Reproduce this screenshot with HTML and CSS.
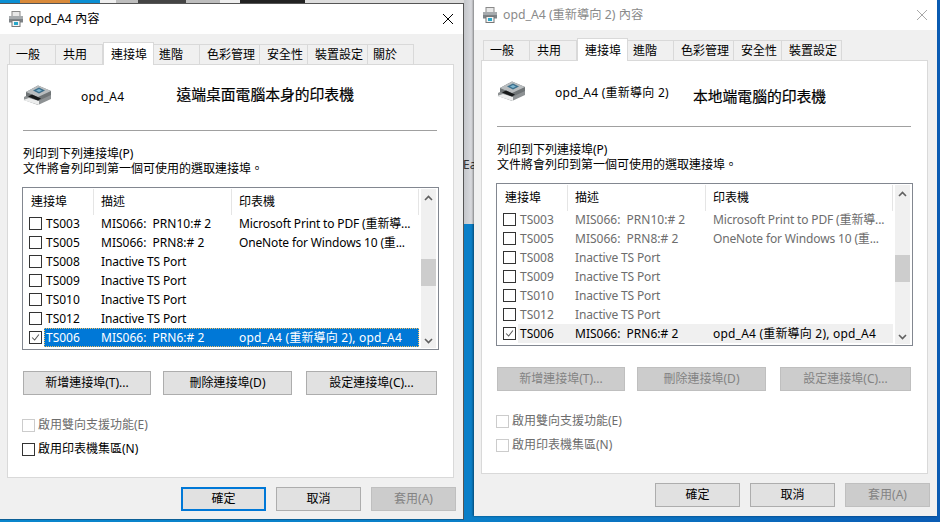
FILE: index.html
```html
<!DOCTYPE html>
<html lang="zh-Hant">
<head>
<meta charset="utf-8">
<title>opd_A4 內容</title>
<link rel="stylesheet" href="styles.css">
</head>
<body>
<div class="desktop">
  <div class="strip strip-top"></div>
  <div class="strip strip-gap"><span class="peek">Ea</span></div>

  <section class="window window-left">
    <header class="titlebar">
      <svg class="title-icon" viewBox="0 0 16 16"><rect x="4" y="0.5" width="8" height="5" fill="#e8e8e8" stroke="#8a8a8a"/><path d="M1 5.5h14v6H1z" fill="#7d8286"/><rect x="1" y="5" width="14" height="3" fill="#a6aaad"/><rect x="4" y="9.5" width="8" height="6" fill="#f4f4f4" stroke="#777"/><rect x="6" y="11" width="4" height="3" fill="#2aa7c9"/></svg>
      <span class="title-text">opd_A4 內容</span>
      <svg class="close" viewBox="0 0 10 10"><path d="M0 0l10 10M10 0L0 10" stroke="currentColor" fill="none"/></svg>
    </header>
    <div class="body">
      <nav class="tabs">
        <span class="tab">一般</span><span class="tab">共用</span><span class="tab tab-on">連接埠</span><span class="tab tab-short">進階</span><span class="tab">色彩管理</span><span class="tab">安全性</span><span class="tab">裝置設定</span><span class="tab tab-short">關於</span>
      </nav>
      <div class="panel">
        <div class="head">
          <svg class="printer" viewBox="0 0 29 20"><path d="M1 12L14 5l14 5v4L15 20 1 15z" fill="#8e9294"/><path d="M3 7l12-6.500 13 5.500v4l-13 6-12-5z" fill="#6f7476"/><path d="M3 7l12-6.500 13 5.500-13 6z" fill="#b9bdbf"/><path d="M10 5.500l6-3 6 3-6 3z" fill="#3b6f8c"/><path d="M13 5.500l3-1.500 3 1.500-3 1.500z" fill="#7fb6cf"/><path d="M0 15l6-2 10 3v4z" fill="#eceded"/><path d="M5 11.500l4-2 9 4-3 2z" fill="#17191a"/></svg>
          <span class="name">opd_A4</span>
          <span class="note note-left">遠端桌面電腦本身的印表機</span>
        </div>
        <hr class="rule">
        <p class="intro">列印到下列連接埠(P)<br>文件將會列印到第一個可使用的選取連接埠。</p>
        <div class="list">
          <div class="table">
            <div class="row row-head"><span class="col-port">連接埠</span><span class="col-desc">描述</span><span class="col-prn">印表機</span></div>
            <div class="row"><span class="port"><i class="box"></i>TS003</span><span class="cell">MIS066:  PRN10:# 2</span><span class="cell cell-tight">Microsoft Print to PDF (重新導...</span></div>
            <div class="row"><span class="port"><i class="box"></i>TS005</span><span class="cell">MIS066:  PRN8:# 2</span><span class="cell cell-tight">OneNote for Windows 10 (重...</span></div>
            <div class="row"><span class="port"><i class="box"></i>TS008</span><span class="cell cell-tight">Inactive TS Port</span><span class="cell"></span></div>
            <div class="row"><span class="port"><i class="box"></i>TS009</span><span class="cell cell-tight">Inactive TS Port</span><span class="cell"></span></div>
            <div class="row"><span class="port"><i class="box"></i>TS010</span><span class="cell cell-tight">Inactive TS Port</span><span class="cell"></span></div>
            <div class="row"><span class="port"><i class="box"></i>TS012</span><span class="cell cell-tight">Inactive TS Port</span><span class="cell"></span></div>
            <div class="row row-sel"><span class="port"><i class="box box-on"><svg viewBox="0 0 13 13"><path d="M2.500 6.500l3 3 5-6.500" fill="none" stroke="#555" stroke-width="1.200"/></svg></i><b class="port-id">TS006</b></span><span class="cell">MIS066:  PRN6:# 2</span><span class="cell cell-wide">opd_A4 (重新導向 2), opd_A4</span></div>
          </div>
          <div class="scrollbar">
            <svg class="chev" viewBox="0 0 9 6"><path d="M1 5l3.500-3.500L8 5" fill="none" stroke="#606060" stroke-width="1.600"/></svg>
            <div class="thumb"></div>
            <svg class="chev" viewBox="0 0 9 6"><path d="M1 1l3.500 3.500L8 1" fill="none" stroke="#606060" stroke-width="1.600"/></svg>
          </div>
        </div>
        <div class="actions">
          <button class="btn btn-add">新增連接埠(T)...</button>
          <button class="btn btn-del">刪除連接埠(D)</button>
          <button class="btn btn-cfg">設定連接埠(C)...</button>
        </div>
        <label class="check check-first check-off"><i class="box"></i>啟用雙向支援功能(E)</label>
        <label class="check"><i class="box"></i>啟用印表機集區(N)</label>
      </div>
      <footer class="footer">
        <button class="btn btn-foot btn-default">確定</button>
        <button class="btn btn-foot">取消</button>
        <button class="btn btn-foot btn-off">套用(A)</button>
      </footer>
    </div>
  </section>

  <section class="window window-right">
    <header class="titlebar">
      <svg class="title-icon" viewBox="0 0 16 16"><rect x="4" y="0.5" width="8" height="5" fill="#e8e8e8" stroke="#8a8a8a"/><path d="M1 5.500h14v6H1z" fill="#7d8286"/><rect x="1" y="5" width="14" height="3" fill="#a6aaad"/><rect x="4" y="9.500" width="8" height="6" fill="#f4f4f4" stroke="#777"/><rect x="6" y="11" width="4" height="3" fill="#2aa7c9"/></svg>
      <span class="title-text">opd_A4 (重新導向 2) 內容</span>
      <svg class="close" viewBox="0 0 10 10"><path d="M0 0l10 10M10 0L0 10" stroke="currentColor" fill="none"/></svg>
    </header>
    <div class="body">
      <nav class="tabs">
        <span class="tab">一般</span><span class="tab">共用</span><span class="tab tab-on">連接埠</span><span class="tab tab-short">進階</span><span class="tab">色彩管理</span><span class="tab">安全性</span><span class="tab">裝置設定</span>
      </nav>
      <div class="panel">
        <div class="head">
          <svg class="printer" viewBox="0 0 29 20"><path d="M1 12L14 5l14 5v4L15 20 1 15z" fill="#8e9294"/><path d="M3 7l12-6.500 13 5.500v4l-13 6-12-5z" fill="#6f7476"/><path d="M3 7l12-6.500 13 5.500-13 6z" fill="#b9bdbf"/><path d="M10 5.500l6-3 6 3-6 3z" fill="#3b6f8c"/><path d="M13 5.500l3-1.500 3 1.500-3 1.500z" fill="#7fb6cf"/><path d="M0 15l6-2 10 3v4z" fill="#eceded"/><path d="M5 11.500l4-2 9 4-3 2z" fill="#17191a"/></svg>
          <span class="name">opd_A4 (重新導向 2)</span>
          <span class="note note-right">本地端電腦的印表機</span>
        </div>
        <hr class="rule">
        <p class="intro">列印到下列連接埠(P)<br>文件將會列印到第一個可使用的選取連接埠。</p>
        <div class="list">
          <div class="table">
            <div class="row row-head"><span class="col-port">連接埠</span><span class="col-desc">描述</span><span class="col-prn">印表機</span></div>
            <div class="row row-dim"><span class="port"><i class="box"></i>TS003</span><span class="cell">MIS066:  PRN10:# 2</span><span class="cell cell-tight">Microsoft Print to PDF (重新導...</span></div>
            <div class="row row-dim"><span class="port"><i class="box"></i>TS005</span><span class="cell">MIS066:  PRN8:# 2</span><span class="cell cell-tight">OneNote for Windows 10 (重...</span></div>
            <div class="row row-dim"><span class="port"><i class="box"></i>TS008</span><span class="cell cell-tight">Inactive TS Port</span><span class="cell"></span></div>
            <div class="row row-dim"><span class="port"><i class="box"></i>TS009</span><span class="cell cell-tight">Inactive TS Port</span><span class="cell"></span></div>
            <div class="row row-dim"><span class="port"><i class="box"></i>TS010</span><span class="cell cell-tight">Inactive TS Port</span><span class="cell"></span></div>
            <div class="row row-dim"><span class="port"><i class="box"></i>TS012</span><span class="cell cell-tight">Inactive TS Port</span><span class="cell"></span></div>
            <div class="row row-idle"><span class="port"><i class="box box-on"><svg viewBox="0 0 13 13"><path d="M2.500 6.500l3 3 5-6.500" fill="none" stroke="#555" stroke-width="1.200"/></svg></i><b class="port-id">TS006</b></span><span class="cell">MIS066:  PRN6:# 2</span><span class="cell cell-wide">opd_A4 (重新導向 2), opd_A4</span></div>
          </div>
          <div class="scrollbar">
            <svg class="chev" viewBox="0 0 9 6"><path d="M1 5l3.500-3.500L8 5" fill="none" stroke="#606060" stroke-width="1.600"/></svg>
            <div class="thumb"></div>
            <svg class="chev" viewBox="0 0 9 6"><path d="M1 1l3.500 3.500L8 1" fill="none" stroke="#606060" stroke-width="1.600"/></svg>
          </div>
        </div>
        <div class="actions">
          <button class="btn btn-add btn-off">新增連接埠(T)...</button>
          <button class="btn btn-del btn-off">刪除連接埠(D)</button>
          <button class="btn btn-cfg btn-off">設定連接埠(C)...</button>
        </div>
        <label class="check check-first check-off"><i class="box"></i>啟用雙向支援功能(E)</label>
        <label class="check check-off"><i class="box"></i>啟用印表機集區(N)</label>
      </div>
      <footer class="footer">
        <button class="btn btn-foot">確定</button>
        <button class="btn btn-foot">取消</button>
        <button class="btn btn-foot btn-off">套用(A)</button>
      </footer>
    </div>
  </section>
</div>
</body>
</html>
```
FILE: styles.css
```css
* { box-sizing: border-box; }
html, body { margin: 0; height: 100%; overflow: hidden; }
body { font: 12px/16px "Noto Sans", "Noto Sans CJK TC", sans-serif; color: #000; }

.desktop {
  position: relative;
  width: 940px;
  height: 522px;
  overflow: hidden;
  background: linear-gradient(90deg, #0a86cc 0%, #0a7fc8 50%, #0a5cb4 100%);
}
.strip { position: absolute; }
.strip-top {
  left: 0; top: 0; width: 464px; height: 3px;
  background: linear-gradient(90deg, #0b8fd3 0 20px, #d98a3a 20px 70px, #0b8fd3 70px 100px, #eee 100px 116px, #bdbdbd 116px 138px, #444 138px 186px, #bdbdbd 186px 220px, #eee 220px 240px, #222 240px 305px, #ddd 305px);
}
.strip-gap {
  left: 464px; top: 0; width: 10px; height: 224px;
  background: linear-gradient(90deg, #c4c6ca, #dfe0e4);
}
.peek { position: absolute; left: -1px; top: 157px; color: #333; }

.window {
  position: absolute;
  width: 463px;
  height: 517px;
  display: flex;
  flex-direction: column;
  background: #f0f0f0;
}
.window-left {
  left: 0; top: 3px;
  border-top: 1px solid #555;
  border-right: 1px solid #555;
  border-bottom: 1px solid #0b5f96;
  width: 464px;
}
.window-right {
  left: 474px; top: -1px;
  box-shadow: -1px 0 2px rgba(0,0,0,.45);
}

.titlebar {
  flex: none;
  display: flex;
  align-items: center;
  height: 30px;
  padding: 0 10px 0 8px;
  background: #fff;
}
.title-icon { width: 16px; height: 16px; flex: none; }
.title-text { margin-left: 5px; font-size: 12.250px; flex: 1; }
.close { width: 10px; height: 10px; color: #000; }
.window-right .title-text { color: #8a8a8a; }
.window-right .close { color: #a8a8a8; }
.window-right .titlebar { height: 31px; padding-top: 1px; }

.body { flex: 1; display: flex; flex-direction: column; min-height: 0; }
.tabs { display: flex; align-items: flex-end; height: 30px; margin-left: 9px; }
.tab {
  height: 20px;
  min-width: 47px;
  padding: 0 4px 0 7px;
  background: #f0f0f0;
  border-top: 1px solid #d9d9d9;
  border-right: 1px solid #d9d9d9;
  line-height: 20px;
  white-space: nowrap;
}
.tab-short { min-width: 46px; padding-left: 5px; }
.tab:first-child { border-left: 1px solid #d9d9d9; padding-left: 6px; }
.tab-on {
  height: 23px;
  min-width: 51px;
  padding: 0 6px 0 7px;
  background: #fff;
  border-left: 1px solid #d9d9d9;
  line-height: 24px;
  position: relative;
  z-index: 1;
  margin-bottom: -1px;
}
.panel {
  width: 447px;
  height: 414px;
  margin-left: 7px;
  padding: 0 15px;
  background: #fff;
  border: 1px solid #d9d9d9;
}
.head { display: flex; align-items: flex-start; height: 65px; }
.printer { width: 29px; height: 20px; flex: none; margin-top: 20px; }
.name { margin: 24px 0 0 29px; flex: none; white-space: nowrap; letter-spacing: .25px; }
.note { font-size: 14.800px; line-height: 20px; flex: none; -webkit-text-stroke: .2px #000; white-space: nowrap; }
.note-left { margin: 19px 0 0 52px; }
.note-right { margin: 25px 0 0 24px; }
.rule { margin: 0; border: 0; border-top: 1px solid #a0a0a0; width: 414px; }
.intro { margin: 15px 0 0; line-height: 15px; }

.list {
  display: flex;
  width: 417px;
  height: 163px;
  margin: 11px 0 0 -1px;
  padding: 1px 1px 1px 0;
  border: 1px solid #828790;
  background: #fff;
}
.table { width: 396px; flex: none; }
.row {
  display: grid;
  grid-template-columns: 71px 138px 187px;
  height: 19px;
  align-items: center;
  white-space: pre;
}
.row-head { height: 25px; align-items: stretch; }
.row-head span { padding-left: 7px; border-right: 1px solid #e5e5e5; line-height: 26px; }
.row-head .col-port { padding-left: 8px; }
.port { display: flex; align-items: center; padding-left: 6px; }
.cell { padding-left: 7px; overflow: hidden; }
.cell-tight { letter-spacing: -.15px; }
.cell-wide { letter-spacing: .2px; }
.box {
  flex: none;
  display: block;
  width: 13px;
  height: 13px;
  margin-right: 4px;
  border: 1px solid #333;
  background: #fff;
}
.box svg { display: block; width: 11px; height: 11px; }
.port-id { font-weight: 400; margin-left: 0; }
.row-sel { position: relative; }
.row-sel::before {
  content: "";
  position: absolute;
  left: 21px; right: 0; top: 0; bottom: 0;
  background: #0078d7;
  outline: 1px dotted #f5c060;
  outline-offset: -1px;
}
.row-sel > * { position: relative; }
.row-sel .port-id, .row-sel .cell { color: #fff; }
.row-dim { color: #6d6d6d; }
.row-idle { position: relative; }
.row-idle::before {
  content: "";
  position: absolute;
  left: 21px; right: 0; top: 0; bottom: 0;
  background: #f0f0f0;
}
.row-idle > * { position: relative; }

.scrollbar {
  width: 15px;
  margin: 0 0 0 2px;
  background: #f0f0f0;
  position: relative;
}
.chev { position: absolute; left: 3px; width: 9px; height: 6px; }
.chev:first-child { top: 6px; }
.chev:last-child { bottom: 4px; }
.thumb { position: absolute; left: 0; right: 0; top: 70px; height: 27px; background: #cdcdcd; }

.btn {
  font: inherit;
  height: 24px;
  padding: 0;
  color: #000;
  background: #e1e1e1;
  border: 1px solid #adadad;
}
.btn-off { background: #ccc; border-color: #bfbfbf; color: #838383; }
.actions { display: flex; margin: 21px 0 0 0; }
.btn-add { width: 128px; }
.btn-del { width: 129px; margin-left: 12px; }
.btn-cfg { width: 131px; margin-left: 14px; }

.check { display: flex; align-items: center; height: 16px; margin: 8px 0 0 -1px; }
.check .box { margin-right: 3px; }
.check-first { margin-top: 22px; }
.check-off { color: #6d6d6d; }
.check-off .box { border-color: #ccc; }
.check + .check { margin-top: 8px; }

.footer { display: flex; justify-content: flex-end; gap: 10px; padding: 9px 7px 0 0; }
.btn-foot { width: 85px; height: 24px; }
.btn-default { border: 2px solid #0078d7; }
```
